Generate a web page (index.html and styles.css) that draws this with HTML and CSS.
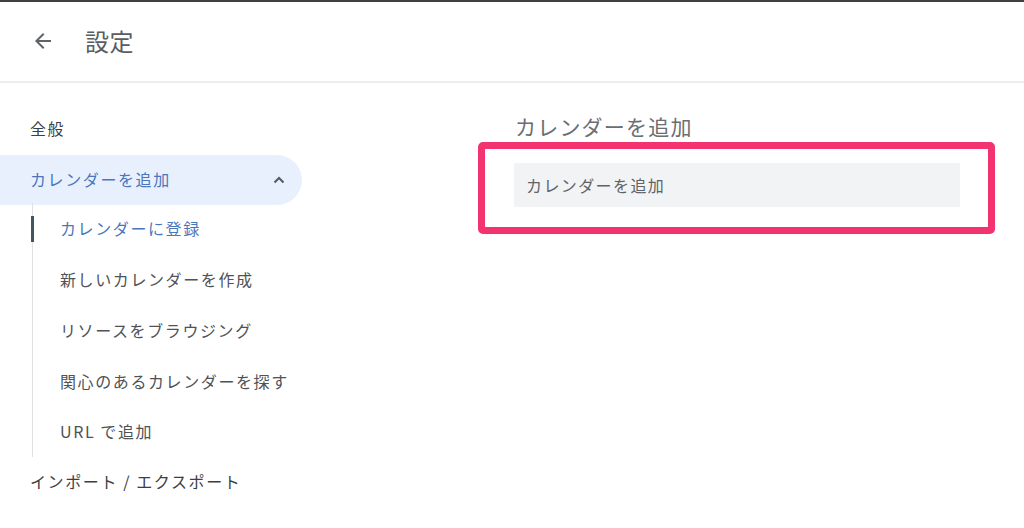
FILE: index.html
```html
<!DOCTYPE html>
<html lang="ja">
<head>
<meta charset="utf-8">
<link rel="stylesheet" href="styles.css">
</head>
<body>
<div class="topline"></div>
<header class="header">
  <svg class="back" viewBox="0 0 24 24" width="24" height="24"><path d="M20 11H7.83l5.59-5.59L12 4l-8 8 8 8 1.41-1.41L7.83 13H20v-2z"/></svg>
  <h1 class="title">設定</h1>
</header>
<div class="layout">
  <nav class="nav">
    <div class="nav-item">全般</div>
    <div class="nav-item active">
      <span>カレンダーを追加</span>
      <svg class="chev" viewBox="0 0 12 8" width="12" height="8"><path d="M1.5 6.5 6 2l4.5 4.5" fill="none" stroke="currentColor" stroke-width="2"/></svg>
    </div>
    <div class="sub">
      <div class="sub-item current">カレンダーに登録</div>
      <div class="sub-item">新しいカレンダーを作成</div>
      <div class="sub-item">リソースをブラウジング</div>
      <div class="sub-item">関心のあるカレンダーを探す</div>
      <div class="sub-item">URL で追加</div>
    </div>
    <div class="nav-item">インポート / エクスポート</div>
  </nav>
  <main class="main">
    <h2 class="heading">カレンダーを追加</h2>
    <div class="highlight">
      <div class="field">カレンダーを追加</div>
    </div>
  </main>
</div>
</body>
</html>
```
FILE: styles.css
```css
* { box-sizing: border-box; }
html, body { margin: 0; padding: 0; background: #fff; }
body {
  font-family: "Noto Sans CJK JP", "Noto Sans", Roboto, sans-serif;
  color: #3c4043;
  width: 1024px;
  height: 528px;
  overflow: hidden;
}
.topline { height: 2px; background: #3d4144; }
.header {
  height: 81px;
  border-bottom: 2px solid #ececec;
  display: flex;
  align-items: center;
  padding-left: 31px;
  padding-bottom: 2px;
}
.back { fill: #5f6368; width: 24px; height: 24px; }
.title {
  margin: 0 0 0 30px;
  font-size: 24px;
  font-weight: 400;
  letter-spacing: 0.5px;
  color: #5a5d61;
  line-height: 1;
}
.layout { display: flex; }
.nav { width: 302px; padding-top: 20px; flex: none; }
.nav-item {
  height: 50px;
  display: flex;
  align-items: center;
  padding-left: 30px;
  font-size: 16px;
  letter-spacing: 1.6px;
  color: #3c4043;
}
.nav-item.active {
  background: #e8f0fe;
  border-radius: 0 25px 25px 0;
  color: #4a76bd;
  justify-content: space-between;
  padding-right: 17px;
  margin-top: 2px;
}
.nav-item.active span { margin-top: -2px; }
.chev { color: #4d5a6b; }
.sub {
  margin-left: 32px;
  border-left: 1px solid #e0e0e0;
  padding: 0;
  position: relative;
  margin-top: 6px;
  margin-bottom: -4px;
}
.sub-item {
  height: 50.75px;
  display: flex;
  align-items: center;
  padding-left: 27px;
  font-size: 16px;
  letter-spacing: 1.6px;
  color: #4f5256;
  margin-top: -3px;
  margin-bottom: 3px;
}
.sub-item:first-child { margin-top: -8px; }
.sub-item.current { color: #4a76bd; position: relative; }
.sub-item.current::before {
  content: "";
  position: absolute;
  left: -2px;
  top: 13px;
  width: 3px;
  height: 26px;
  background: #44555f;
}
.main { flex: 1; padding-top: 29px; padding-left: 176px; }
.heading {
  margin: 0 0 2px 37px;
  font-size: 21px;
  font-weight: 400;
  letter-spacing: 1.2px;
  color: #6b6e72;
  line-height: 28px;
}
.highlight {
  width: 517px;
  height: 92px;
  border: 7px solid #f2336f;
  border-radius: 5px;
  padding: 14px 28px 0 29px;
}
.field {
  height: 44px;
  background: #f1f3f4;
  display: flex;
  align-items: center;
  padding-left: 12px;
  font-size: 16px;
  letter-spacing: 1.4px;
  color: #5f6368;
}
```
